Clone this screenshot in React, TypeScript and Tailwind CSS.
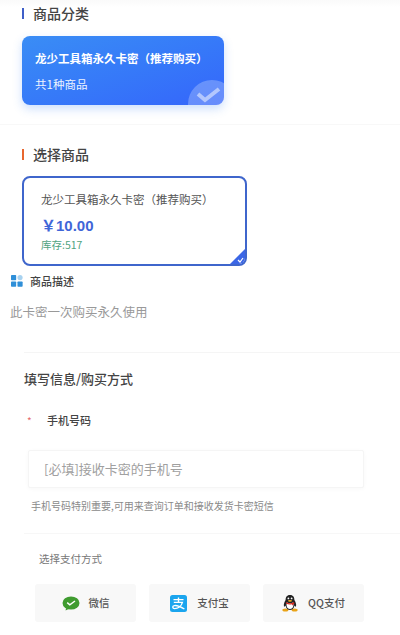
// App.tsx
import React from 'react';

const font = "font-['Noto_Sans_CJK_SC','Liberation_Sans',sans-serif]";

const WechatIcon = () => (
  <svg width="18" height="15" viewBox="0 0 18 15" className="shrink-0">
    <ellipse cx="9" cy="7" rx="8.5" ry="6.6" fill="#3f9b2f" />
    <path d="M4 12 L3.6 14.6 L7 12.8 Z" fill="#3f9b2f" />
    <path d="M5.2 6.6 L7.8 8.8 L13 5" fill="none" stroke="#fff" strokeWidth="1.5" />
  </svg>
);

const AlipayIcon = () => (
  <svg width="17" height="17" viewBox="0 0 17 17" className="shrink-0">
    <rect width="17" height="17" rx="2.5" fill="#1ba5ee" />
    <path d="M3.5 4.6 H13.5 M8.5 2.4 V7.2 M3.8 7.4 H12.4 C11.4 11.2 8 13.6 4.6 13.6 C2.4 13.6 2 11 4.4 10.6 C7.4 10.1 11 12 14.4 14" fill="none" stroke="#fff" strokeWidth="1.4" />
  </svg>
);

const QQIcon = () => (
  <svg width="16" height="18" viewBox="0 0 16 18" className="shrink-0">
    <ellipse cx="3.4" cy="16" rx="3" ry="1.5" fill="#e9a318" />
    <ellipse cx="12.6" cy="16" rx="3" ry="1.5" fill="#e9a318" />
    <path d="M8 1 C4.6 1 3.6 3.6 3.6 6 C2.4 8 1.4 10.4 2 12.4 C3 12.6 3.4 11.8 3.6 11.4 C4 14.6 6 16 8 16 C10 16 12 14.6 12.4 11.4 C12.6 11.8 13 12.6 14 12.4 C14.6 10.4 13.6 8 12.4 6 C12.4 3.6 11.4 1 8 1 Z" fill="#222" />
    <path d="M5 8.6 C6.8 9.6 9.2 9.6 11 8.6 C12 11 11.6 15 8 15 C4.4 15 4 11 5 8.6 Z" fill="#fff" />
    <path d="M4 8 C6.4 9.6 9.6 9.6 12 8 L12.4 10 L11 10.6 L11 11.8 L9.8 10.2 C8 10.6 6 10.4 4.2 9.8 Z" fill="#d8281e" />
    <ellipse cx="8" cy="6.8" rx="2" ry="0.9" fill="#f0b323" />
    <circle cx="6.4" cy="4.4" r="0.9" fill="#fff" />
    <circle cx="9.6" cy="4.4" r="0.9" fill="#fff" />
  </svg>
);

const PayButton = ({ icon, label, gap }: { icon: React.ReactNode; label: string; gap: string }) => (
  <div className={`w-[101px] h-[38px] bg-[#f8f8f8] rounded-[3px] flex items-center justify-center ${gap}`}>
    {icon}
    <span className="text-[10.5px] font-medium text-[#555]">{label}</span>
  </div>
);

const App: React.FC = () => {
  return (
    <div className={`w-[400px] h-[635px] overflow-hidden bg-white ${font}`}>
      {/* 商品分类 */}
      <div className="h-[125px] pl-[22px] pt-[2px] border-b border-[#f8f8f8] bg-gradient-to-b from-[#fafafa] to-white to-[6%]">
        <div className="flex items-center gap-[9px] h-[22px]">
          <div className="w-[2px] h-[11px] bg-[#3f5fc8]" />
          <h2 className="text-[14px] font-medium text-[#444]">商品分类</h2>
        </div>
        <div className="relative mt-[12px] w-[202px] h-[69px] rounded-[8px] overflow-hidden bg-gradient-to-br from-[#3a8df5] to-[#3565fb] pl-[13px] pt-[13px] shadow-[0_4px_10px_rgba(60,130,245,0.25)]">
          <div className="text-[11.5px] font-bold leading-[18px] text-white whitespace-nowrap">龙少工具箱永久卡密（推荐购买）</div>
          <div className="mt-[8px] text-[11.5px] leading-[18px] text-[#eef4ff]">共1种商品</div>
          <div className="absolute left-[166px] top-[44px] w-[48px] h-[48px] rounded-full bg-white/25" />
          <svg width="26" height="18" viewBox="0 0 26 18" className="absolute left-[174px] top-[50px]">
            <path d="M2 8 L9 14 L23 3" fill="none" stroke="#ffffff" strokeOpacity="0.5" strokeWidth="4" />
          </svg>
        </div>
      </div>

      {/* 选择商品 */}
      <div className="pl-[22px] pt-[18px]">
        <div className="flex items-center gap-[9px] h-[22px]">
          <div className="w-[2px] h-[11px] bg-[#e8672f]" />
          <h2 className="text-[14px] font-medium text-[#444]">选择商品</h2>
        </div>
        <div className="relative mt-[11px] w-[225px] h-[90px] rounded-[8px] border-2 border-[#3f66cc] overflow-hidden pl-[17px] pt-[12px]">
          <div className="text-[11.5px] leading-[18px] text-[#555] whitespace-nowrap">龙少工具箱永久卡密（推荐购买）</div>
          <div className="mt-[8px] text-[15px] font-bold leading-[20px] text-[#3f66d8] font-['Liberation_Sans','Noto_Sans_CJK_SC',sans-serif]">￥10.00</div>
          <div className="mt-[1px] text-[10.5px] leading-[16px] text-[#4fa37f]">库存:517</div>
          <div className="absolute right-[-1px] bottom-[-1px] w-0 h-0 border-l-[17px] border-l-transparent border-b-[17px] border-b-[#3b66e6]" />
          <svg width="7" height="6" viewBox="0 0 7 6" className="absolute right-[1px] bottom-[1px]">
            <path d="M1 3 L3 5 L6 1" fill="none" stroke="#fff" strokeWidth="1.2" />
          </svg>
        </div>
      </div>

      {/* 商品描述 */}
      <div className="pl-[10px] pr-0 mt-[7px]">
        <div className="flex items-center gap-[7px] h-[16px]">
          <svg width="12" height="12" viewBox="0 0 13 13" className="shrink-0 ml-[1px]">
            <rect x="0" y="0" width="5.6" height="5.6" rx="0.8" fill="#2f8fd8" />
            <circle cx="9.8" cy="2.8" r="2.8" fill="#a8d2f0" />
            <rect x="0" y="7" width="5.6" height="5.6" rx="0.8" fill="#2f8fd8" />
            <rect x="7" y="7" width="5.6" height="5.6" rx="0.8" fill="#2f8fd8" />
          </svg>
          <span className="text-[11px] font-medium text-[#444]">商品描述</span>
        </div>
        <p className="mt-[13px] text-[12.5px] leading-[20px] text-[#999]">此卡密一次购买永久使用</p>
      </div>

      {/* 填写信息 */}
      <div className="ml-[24px] mt-[30px] border-t border-[#f5f5f5] pt-[16px]">
        <h3 className="text-[13px] font-medium leading-[20px] text-[#444]">填写信息/购买方式</h3>
        <div className="flex items-center mt-[21px] h-[20px]">
          <span className="w-[23px] pl-[3px] text-[10px] text-[#e56a6a]">*</span>
          <span className="text-[11px] font-medium text-[#444]">手机号码</span>
        </div>
        <div className="ml-[4px] mt-[20px] w-[336px] h-[38px] flex items-center pl-[15px] border border-[#f5f5f5] rounded-[2px] bg-white shadow-[0_1px_4px_rgba(0,0,0,0.03)] text-[13px] text-[#a0a0a0]">
          [必填]接收卡密的手机号
        </div>
        <p className="ml-[7px] mt-[10px] text-[10px] leading-[16px] text-[#8a8a8a]">手机号码特别重要,可用来查询订单和接收发货卡密短信</p>
      </div>

      {/* 支付方式 */}
      <div className="ml-[24px] mt-[19px] border-t border-[#f7f7f7] pt-[17px]">
        <div className="ml-[15px] text-[10.5px] leading-[16px] text-[#777]">选择支付方式</div>
        <div className="ml-[11px] mt-[17px] flex gap-[13px]">
          <PayButton icon={<WechatIcon />} label="微信" gap="gap-[9px]" />
          <PayButton icon={<AlipayIcon />} label="支付宝" gap="gap-[10px]" />
          <PayButton icon={<QQIcon />} label="QQ支付" gap="gap-[10px]" />
        </div>
      </div>
    </div>
  );
};

export default App;
